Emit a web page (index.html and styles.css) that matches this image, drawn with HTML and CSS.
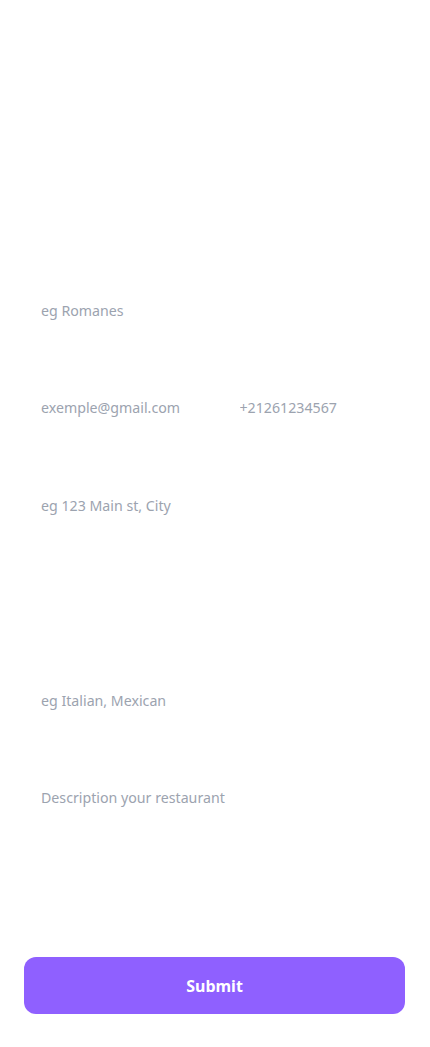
FILE: index.html
```html
<!DOCTYPE html>
<html lang="en">
<head>
<meta charset="utf-8">
<title>Restaurant form</title>
<link rel="stylesheet" href="styles.css">
</head>
<body>
<form class="form">
  <div class="field">
    <input class="input" type="text" placeholder="eg Romanes">
  </div>
  <div class="field row">
    <input class="input" type="email" placeholder="exemple@gmail.com">
    <input class="input" type="tel" placeholder="+21261234567">
  </div>
  <div class="field">
    <input class="input" type="text" placeholder="eg 123 Main st, City">
  </div>
  <div class="field">
    <input class="input" type="text">
  </div>
  <div class="field">
    <input class="input" type="text" placeholder="eg Italian, Mexican">
  </div>
  <div class="field">
    <textarea class="input area" placeholder="Description your restaurant"></textarea>
  </div>
  <button class="submit" type="button">Submit</button>
</form>
</body>
</html>
```
FILE: styles.css
```css
* { box-sizing: border-box; }
html, body { margin: 0; padding: 0; background: #ffffff; }
body { font-family: "Noto Sans", "Open Sans", sans-serif; }
.form {
  display: flex;
  flex-direction: column;
  gap: 49.5px;
  padding: 286px 25px 0 24px;
}
.field { display: flex; }
.row { gap: 16px; }
.input {
  flex: 1;
  min-width: 0;
  height: 48px;
  padding: 14px 16px 14px 17px;
  border: none;
  outline: none;
  background: #ffffff;
  font-family: inherit;
  font-size: 14.2px;
  line-height: 20px;
  color: #111827;
}
.input::placeholder { color: #9ca3af; }
.area { height: 150px; resize: none; }
.submit {
  margin-top: -16px;
  height: 57px;
  width: 100%;
  border: none;
  border-radius: 12px;
  background: #8f60ff;
  color: #ffffff;
  font-family: inherit;
  font-size: 16px;
  font-weight: 700;
}
```
